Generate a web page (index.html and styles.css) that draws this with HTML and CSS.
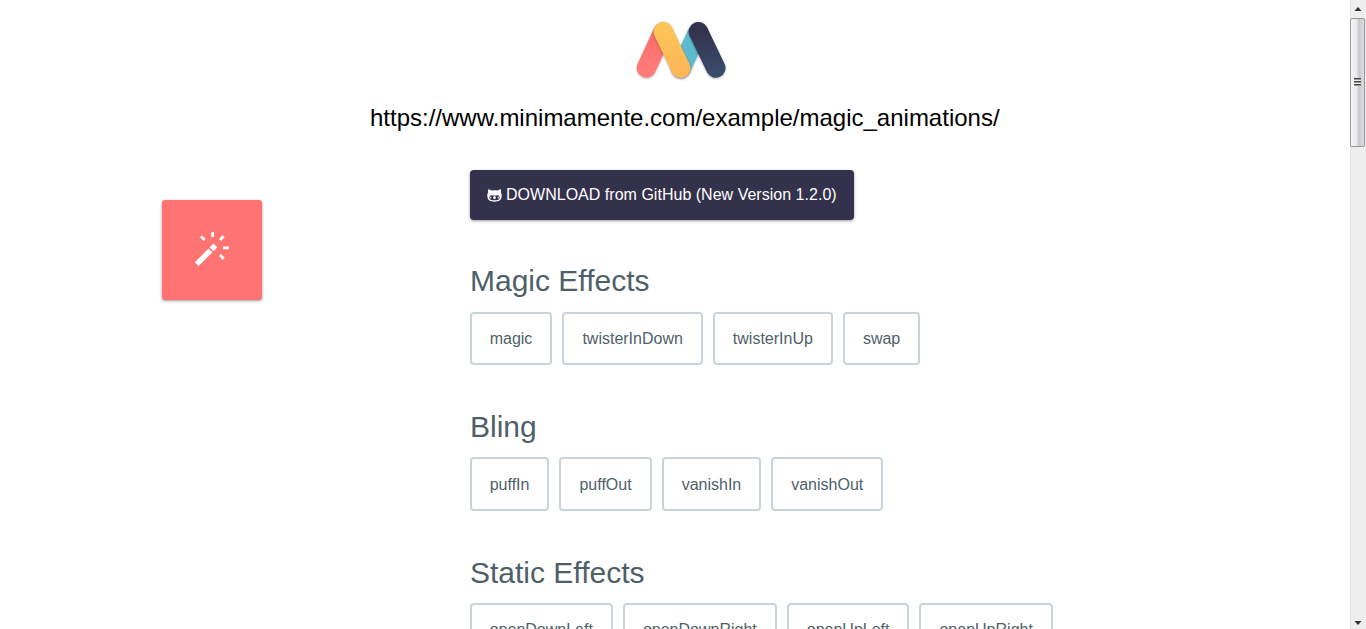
FILE: index.html
```html
<!DOCTYPE html>
<html lang="en">
<head>
<meta charset="utf-8">
<title>Magic Animations</title>
<link rel="stylesheet" href="styles.css">
</head>
<body>
<div class="page">
  <header class="header">
    <svg class="logo" width="110" height="80" viewBox="0 0 110 80">
      <defs>
        <linearGradient id="coral" x1="0" y1="0" x2="0" y2="80" gradientUnits="userSpaceOnUse"><stop offset=".2" stop-color="#f96b68"/><stop offset=".75" stop-color="#ff7b7a"/></linearGradient>
        <linearGradient id="amber" x1="0" y1="10" x2="0" y2="70" gradientUnits="userSpaceOnUse"><stop offset="0" stop-color="#fdc857"/><stop offset="1" stop-color="#ffb35a"/></linearGradient>
        <linearGradient id="navy" x1="0" y1="10" x2="0" y2="70" gradientUnits="userSpaceOnUse"><stop offset=".15" stop-color="#34314c"/><stop offset="1" stop-color="#39506f"/></linearGradient>
        <filter id="shade" filterUnits="userSpaceOnUse" x="0" y="0" width="110" height="80" color-interpolation-filters="sRGB"><feDropShadow dx="0" dy=".8" stdDeviation="1.2" flood-opacity=".3"/></filter>
      </defs>
      <g fill="none" stroke-width="19.4" stroke-linecap="round">
        <path stroke="url(#coral)" filter="url(#shade)" d="M37 22 20.4 58"/>
        <path stroke="#5dbbd0" filter="url(#shade)" d="M72 22 55 58"/>
        <path stroke="url(#amber)" filter="url(#shade)" d="M37.3 21.7 54.8 58.2"/>
        <path stroke="url(#navy)" filter="url(#shade)" d="M72.4 21.7 89.8 58"/>
      </g>
    </svg>
    <p class="address">https://www.minimamente.com/example/magic_animations/</p>
  </header>
  <main class="main">
    <aside class="preview">
      <div class="tile">
        <svg width="36" height="36" viewBox="0 0 36 36" fill="none" stroke="#fff">
          <path stroke-width="5.4" d="M2.7 32.2 16.4 18.5M17.5 17.4 21.4 13.5"/>
          <path stroke-width="2.8" d="M18.6 0v5M7 4.2l3.7 3.7M29.7 4.2 26 7.9M29 15.9h6M25.9 23l3.8 3.8"/>
        </svg>
      </div>
    </aside>
    <div class="effects">
      <a class="download"><svg class="cat" width="15" height="13" viewBox="0 0 15 13"><path fill="#fff" fill-rule="evenodd" d="M1.3 0 4.5 1.6Q7.5 1 10.5 1.6L13.7 0Q14.4 2 13.9 3.6 15 5 14.7 7.5 14.3 12.7 7.5 12.7T.3 7.5Q0 5 1.1 3.6.6 2 1.3 0M4.3 6.2Q2.4 6.2 2.4 8.4C2.4 10.8 4.5 11.2 7.5 11.2S12.6 10.8 12.6 8.4Q12.6 6.2 10.7 6.2 7.5 6.8 4.3 6.2"/><g fill="#fff"><ellipse cx="7.5" cy="8.6" rx="1.3" ry="1.6"/><ellipse cx="3.7" cy="8.6" rx=".5" ry="1.2"/><ellipse cx="11.3" cy="8.6" rx=".5" ry="1.2"/></g></svg><span>DOWNLOAD from GitHub (New Version 1.2.0)</span></a>
      <section class="group">
        <h2 class="title">Magic Effects</h2>
        <div class="buttons"><a class="button">magic</a><a class="button">twisterInDown</a><a class="button">twisterInUp</a><a class="button">swap</a></div>
      </section>
      <section class="group">
        <h2 class="title">Bling</h2>
        <div class="buttons"><a class="button">puffIn</a><a class="button">puffOut</a><a class="button">vanishIn</a><a class="button">vanishOut</a></div>
      </section>
      <section class="group">
        <h2 class="title">Static Effects</h2>
        <div class="buttons"><a class="button">openDownLeft</a><a class="button">openDownRight</a><a class="button">openUpLeft</a><a class="button">openUpRight</a></div>
      </section>
    </div>
  </main>
</div>
<div class="scrollbar">
  <svg class="arrow" width="16" height="18" viewBox="0 0 16 18"><path fill="#333" d="M4.5 11 8 7l3.5 4z"/></svg>
  <div class="thumb"><i class="grip"></i></div>
  <svg class="arrow arrow-down" width="16" height="18" viewBox="0 0 16 18"><path fill="#333" d="M4.5 10h7L8 14z"/></svg>
</div>
</body>
</html>
```
FILE: styles.css
```css
* { box-sizing: border-box; }
body { margin: 0; height: 629px; overflow: hidden; display: flex; background: #fff; color: #4f5f69; font: 16px/20px "Liberation Sans", Arial, sans-serif; }
.page { width: 1350px; height: 629px; overflow: hidden; }
.header { height: 170px; padding-top: 10px; }
.logo { display: block; margin-left: 626px; }
.address { margin: 12px 0 0 370px; font-size: 24px; line-height: 32px; color: #000; white-space: nowrap; }
.main { display: flex; padding-left: 162px; }
.preview { width: 307.7px; padding-top: 30px; }
.tile { width: 100px; height: 100px; display: flex; align-items: center; justify-content: center; background: #ff7473; border-radius: 3px; box-shadow: 0 1px 3px rgba(0, 0, 0, .4); }
.effects { flex: 1; }
.download { display: flex; align-items: center; gap: 4px; width: 384.3px; height: 50px; padding-left: 17.3px; background: #34314c; color: #fff; border-radius: 4px; box-shadow: 0 1px 3px rgba(0, 0, 0, .4); white-space: nowrap; letter-spacing: .02px; }
.group { height: 145.7px; }
.download + .group { margin-top: 39.8px; }
.title { margin: 0; padding: 3.6px 0 0 .3px; height: 52px; font-size: 30px; line-height: 36px; font-weight: 400; }
.buttons { display: flex; gap: 10px; }
.button { height: 53.4px; padding: 15.2px 18px 0; border: 2px solid #c9d3da; border-radius: 4px; white-space: nowrap; }
.scrollbar { width: 16px; height: 629px; display: flex; flex-direction: column; background: #eee; border-left: 1px solid #e3e3e3; }
.arrow { display: block; margin-left: -1px; }
.arrow-down { margin-top: auto; }
.thumb { height: 129px; width: 15px; margin-left: -1px; display: flex; align-items: center; justify-content: center; border: 1px solid #979797; border-radius: 2px; background: linear-gradient(90deg, #f7f7f8, #e8e8ec 45%, #c8c8d0 60%, #dcdce1); }
.grip { width: 7px; height: 8px; margin: -2px 0 0; background: repeating-linear-gradient(#444 0 1px, #999 1px 2px, #eee 2px 3px); }
```
